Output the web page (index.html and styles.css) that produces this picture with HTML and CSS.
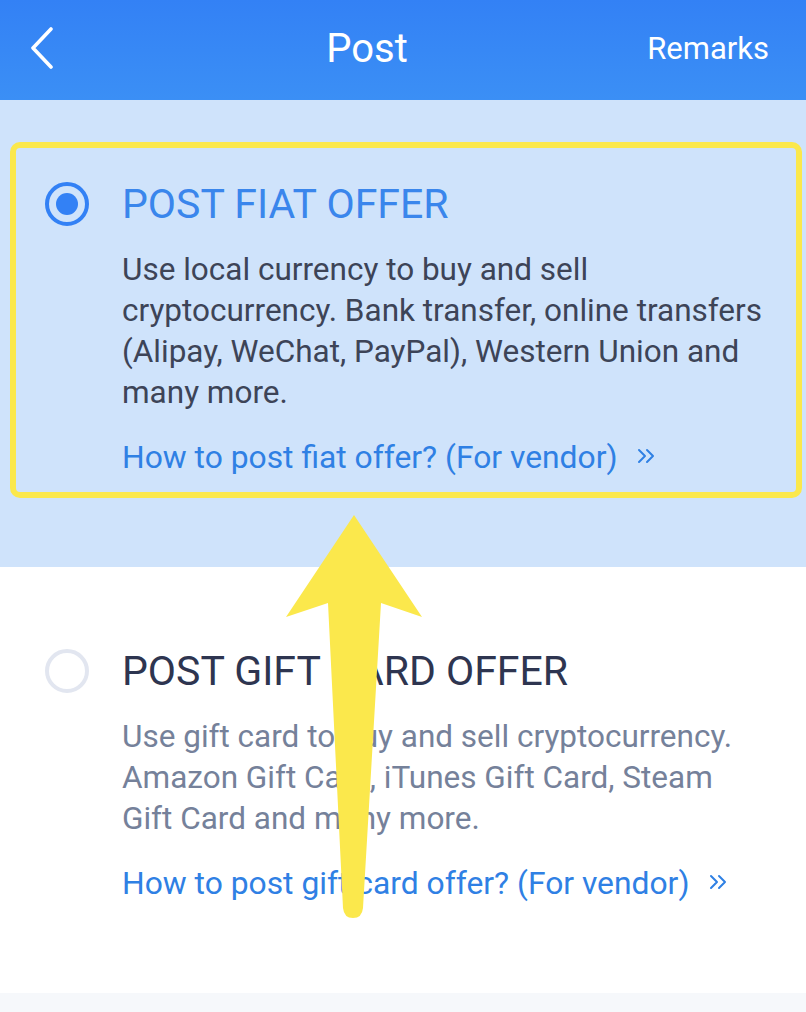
FILE: index.html
```html
<!DOCTYPE html>
<html>
<head>
  <title>Post</title>
  <link rel="stylesheet" href="styles.css">
</head>
<body>
  <div class="topbar">
    <a class="back" href="#">
      <svg width="24" height="42" viewBox="0 0 24 42"><polyline points="21,2 3,21 21,40" fill="none" stroke="#fff" stroke-width="3.6" stroke-linecap="round" stroke-linejoin="round"/></svg>
    </a>
    <div class="title">Post</div>
    <a class="remarks" href="#">Remarks</a>
  </div>

  <div class="section active">
    <div class="option highlight">
      <span class="radio checked"></span>
      <div class="body">
        <h2>POST FIAT OFFER</h2>
        <p>Use local currency to buy and sell cryptocurrency. Bank transfer, online transfers (Alipay, WeChat, PayPal), Western Union and many more.</p>
        <a class="howto" href="#">How to post fiat offer? (For vendor)
          <svg class="more" width="18" height="16" viewBox="0 0 18 16"><polyline points="2,2 8,8 2,14" /><polyline points="10,2 16,8 10,14" /></svg>
        </a>
      </div>
    </div>
  </div>

  <div class="section">
    <div class="option">
      <span class="radio"></span>
      <div class="body">
        <h2>POST GIFT CARD OFFER</h2>
        <p>Use gift card to buy and sell cryptocurrency. Amazon Gift Card, iTunes Gift Card, Steam Gift Card and many more.</p>
        <a class="howto" href="#">How to post gift card offer? (For vendor)
          <svg class="more" width="18" height="16" viewBox="0 0 18 16"><polyline points="2,2 8,8 2,14" /><polyline points="10,2 16,8 10,14" /></svg>
        </a>
      </div>
    </div>
  </div>

  <div class="footer"></div>

  <!-- annotation arrow drawn over the page -->
  <svg class="arrow" width="806" height="1012" viewBox="0 0 806 1012">
    <path d="M354,515 L422,617 L381,603 L363,908 Q362,918 353,918 Q344,918 343,908 L328,603 L286,617 Z" fill="#fbe84c"/>
  </svg>
</body>
</html>
```

FILE: styles.css
```css
* {
  box-sizing: border-box;
  margin: 0;
  padding: 0;
}
body {
  width: 806px;
  height: 1012px;
  font-family: Roboto, "Noto Sans", Arial, sans-serif;
  background-color: #fff;
  position: relative;
  overflow: hidden;
}
a {
  text-decoration: none;
}
.topbar {
  height: 100px;
  background: linear-gradient(#3381f5, #3b8ff5);
  display: flex;
  align-items: center;
  padding: 0 37px 0 30px;
  color: #fff;
}
.back {
  display: flex;
  width: 40px;
  margin-top: -4px;
}
.title {
  flex: 1;
  text-align: center;
  font-size: 40px;
  margin-left: 17px;
  margin-top: -4px;
}
.remarks {
  color: #fff;
  font-size: 31px;
  margin-top: -4px;
}
.section {
  padding: 42px 4px 69px 10px;
  background-color: #fff;
}
.section.active {
  background-color: #cfe3fb;
}
.option {
  display: flex;
  align-items: flex-start;
  border: 6px solid transparent;
  border-radius: 10px;
  padding: 31px 30px 14px 29px;
}
.option.highlight {
  border-color: #fbe84c;
}
.radio {
  flex: none;
  width: 44px;
  height: 44px;
  border-radius: 50%;
  border: 4px solid #e2e6f0;
  margin-top: 3px;
  position: relative;
}
.radio.checked {
  border-color: #3381f5;
}
.radio.checked::after {
  content: "";
  position: absolute;
  left: 7px;
  top: 7px;
  width: 22px;
  height: 22px;
  border-radius: 50%;
  background-color: #3381f5;
}
.body {
  margin-left: 33px;
}
.body h2 {
  font-weight: 400;
  font-size: 41px;
  line-height: 50px;
  color: #2e3550;
}
.active .body h2 {
  color: #3a86ec;
}
.body p {
  font-size: 31.5px;
  line-height: 41px;
  margin-top: 20px;
  color: #75819a;
}
.active .body p {
  color: #3d4457;
}
.howto {
  display: block;
  margin-top: 24px;
  font-size: 31.8px;
  line-height: 41px;
  white-space: nowrap;
  color: #2f80e4;
}
.more {
  margin-left: 12px;
  vertical-align: 4px;
  fill: none;
  stroke: #2f80e4;
  stroke-width: 2;
  stroke-linecap: round;
  stroke-linejoin: round;
}
.footer {
  height: 40px;
  background-color: #f6f8fb;
}
.arrow {
  position: absolute;
  left: 0;
  top: 0;
  pointer-events: none;
}
```
